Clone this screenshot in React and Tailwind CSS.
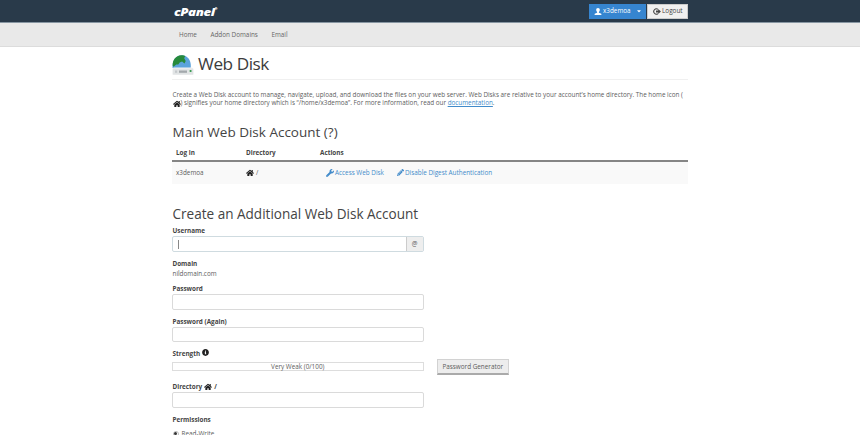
import { FaHome, FaWrench, FaPencilAlt, FaInfoCircle, FaCaretDown } from 'react-icons/fa';

function UserIcon() {
  return (
    <svg viewBox="0 0 14 14" className="h-[7px] w-[8px] shrink-0" fill="currentColor">
      <path d="M7 0c-2.300 0-3.600 1.500-3.600 3.700 0 1.800.8 3.500 1.800 4.300v1.400L1.400 10.900C.6 11.300.2 11.800.2 12.500V14h13.600v-1.500c0-.7-.4-1.200-1.200-1.600L8.800 9.400V8c1-.8 1.800-2.500 1.800-4.300C10.600 1.500 9.300 0 7 0z" />
    </svg>
  );
}

function LogoutIcon() {
  return (
    <svg viewBox="0 0 16 14" className="h-[7px] w-[8px] shrink-0" fill="none">
      <path d="M9.800 2.600A5.300 5.300 0 1 0 9.800 11.400" stroke="currentColor" strokeWidth="2.200" />
      <path d="M6 5.200h4.500V2.200L15.800 7l-5.300 4.800V8.800H6z" fill="currentColor" />
    </svg>
  );
}

function WebDiskIcon() {
  return (
    <svg viewBox="0 0 22 22" className="h-[22px] w-[22px] shrink-0">
      <path d="M.6 14C-.2 6.500 4 1.200 9.800 1.200s9.800 5.300 8.900 12.800z" fill="#5ba3dc" />
      <path d="M.7 11.800C.2 6.200 4 1.400 9.200 1.200c2-.1 3 .2 4 .8l-1 2.200 1.500 2.800-1.200 2.400-2.400-1.800-2.400.8-1.400 2-2 .2L1.500 12.800z" fill="#278a3b" />
      <path d="M1.600 13.600h18.600l1.200 1.400H.6z" fill="#f2f3f4" />
      <rect x=".6" y="14.600" width="20.800" height="6.200" rx=".5" fill="#e1e4e5" />
      <path d="M7 16.500h8v2.300H7z" fill="#a3a8ac" />
      <path d="M3 16.500h2.200v2.300H3z" fill="#c5c9cc" />
      <circle cx="18.600" cy="17" r="1.100" fill="#2f9748" />
    </svg>
  );
}

function Field({ label, className = '' }) {
  return (
    <div className={className}>
      <div className="h-[11px] pl-[0.500px] font-bold leading-[11px] text-[#444]">{label}</div>
      <div className="h-[15.500px] w-[251.500px] rounded-[2px] border border-[#dadada] bg-white" />
    </div>
  );
}

export default function App() {
  return (
    <div className="h-[435px] w-[860px] overflow-hidden whitespace-nowrap bg-white font-['Open_Sans',sans-serif] text-[6.350px] leading-[8px] text-[#5c5c5c]">
      <header className="h-[23px] border-b border-[#8796a2] bg-[#293a4a]">
        <div className="flex h-[22px] items-center pl-[174px] pr-[172px]">
          <div className="mt-px flex origin-left scale-x-[1.200] text-[11px] font-extrabold italic leading-[14px] tracking-[-0.350px] text-white">
            cPanel<span className="text-[3px] leading-[9px]">®</span>
          </div>
          <div className="ml-auto flex h-[15px] gap-px">
            <div className="flex w-[57px] items-center bg-[#3685d0] pl-[5px] text-white">
              <UserIcon />
              <span className="ml-px">x3demoa</span>
              <FaCaretDown className="ml-auto mr-[5px] h-[6px] w-[4px]" />
            </div>
            <div className="flex w-[41px] items-center gap-px border border-[#ccc] bg-[#f0f0f0] pl-[5px] text-[#444]">
              <LogoutIcon />
              <span>Logout</span>
            </div>
          </div>
        </div>
      </header>
      <nav className="flex h-[24px] items-center gap-[13.500px] border-b border-[#dcdcdc] bg-[#e9e9e9] pl-[179px] text-[#666]">
        <span>Home</span>
        <span>Addon Domains</span>
        <span>Email</span>
      </nav>
      <main className="ml-[172px] w-[516px]">
        <h1 className="flex h-[33px] items-center gap-[4px] border-b border-[#f0f0f0] pt-[4px] text-[17.200px] leading-[24px] tracking-[-0.450px] text-[#3c3c3c]">
          <WebDiskIcon />
          <span className="-mt-[2px]">Web Disk</span>
        </h1>
        <p className="mt-[11px] h-[16px] pl-[0.500px] text-[6.330px]">
          Create a Web Disk account to manage, navigate, upload, and download the files on your web server. Web Disks are relative to your account’s home directory. The home icon (<br />
          <FaHome className="-my-[2px] inline h-[8px] w-[8px] align-[-0.500px] text-[#222]" />) signifies your home directory which is “/home/x3demoa”. For more information, read our <span className="text-[#428bca] underline">documentation</span>.
        </p>
        <h2 className="mt-[16px] pl-[0.500px] text-[13.500px] leading-[18px] text-[#444]">Main Web Disk Account (?)</h2>
        <div className="mt-[7.500px] grid h-[13px] grid-cols-[70px_74px_1fr] border-b-2 border-[#858585] pl-[4px] font-bold text-[#444]">
          <span>Log in</span>
          <span>Directory</span>
          <span>Actions</span>
        </div>
        <div className="grid h-[22.500px] grid-cols-[70px_80px_71px_1fr] items-center bg-[#f9f9f9] pl-[4px]">
          <span>x3demoa</span>
          <span className="flex items-center gap-[2px]"><FaHome className="h-[8px] w-[8px] text-[#222]" />/</span>
          <span className="flex items-center gap-px text-[#428bca]"><FaWrench className="h-[8px] w-[8px]" />Access Web Disk</span>
          <span className="flex items-center gap-px text-[#428bca]"><FaPencilAlt className="h-[7px] w-[7px]" />Disable Digest Authentication</span>
        </div>
        <h2 className="mt-[21px] pl-[0.500px] text-[13.550px] leading-[18px] text-[#444]">Create an Additional Web Disk Account</h2>
        <div className="mt-[3px] h-[10px] pl-[0.500px] font-bold leading-[9px] text-[#444]">Username</div>
        <div className="flex h-[16px] w-[251.500px] rounded-[2px] border border-[#cfdbe0]">
          <div className="flex flex-1 items-center pl-[5px]"><span className="h-[9px] w-px bg-[#888]" /></div>
          <div className="w-[17px] border-l border-[#ccc] bg-[#eee] text-center leading-[14px]">@</div>
        </div>
        <div className="mt-[7px] h-[10px] pl-[0.500px] font-bold leading-[9px] text-[#444]">Domain</div>
        <div className="pl-[0.500px] leading-[9px]">nildomain.com</div>
        <Field label="Password" className="mt-[5px]" />
        <Field label="Password (Again)" className="mt-[6px]" />
        <div className="mt-[7px] flex h-[13px] gap-[1.500px] pl-[0.500px] font-bold leading-[9px] text-[#444]">
          Strength <FaInfoCircle className="h-[7px] w-[7px] text-[#222]" />
        </div>
        <div className="flex h-[16px]">
          <div className="h-[9px] w-[251.500px] border border-[#ddd] text-center leading-[8px]">Very Weak (0/100)</div>
          <div className="-mt-[3px] ml-[13px] h-[16px] w-[72.500px] border border-b-2 border-[#d2d2d2] border-b-[#aaa] bg-[#ededed] text-center leading-[14px]">Password Generator</div>
        </div>
        <Field label={<span className="flex items-center gap-[2px]">Directory <FaHome className="h-[8px] w-[8px] text-[#222]" />/</span>} className="mt-[3px]" />
        <div className="mt-[7px] h-[15px] pl-[0.500px] font-bold leading-[9px] text-[#444]">Permissions</div>
        <div className="flex items-center gap-[3px] pl-[0.500px] leading-[8px]">
          <span className="flex h-[6px] w-[6px] items-center justify-center rounded-full border border-[#bbb]"><span className="h-[3px] w-[3px] rounded-full bg-[#333]" /></span>
          Read-Write
        </div>
      </main>
    </div>
  );
}
